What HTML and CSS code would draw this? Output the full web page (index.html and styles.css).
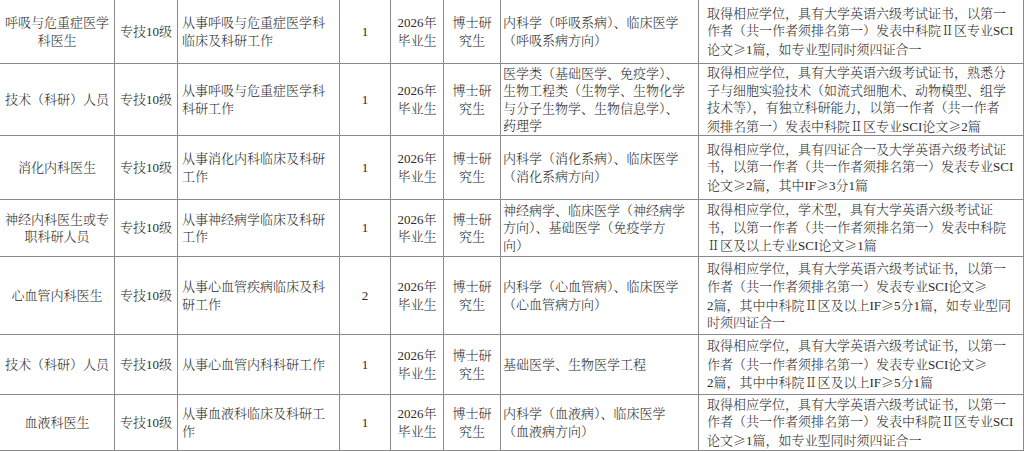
FILE: index.html
```html
<!DOCTYPE html>
<html lang="zh-CN">
<head>
<meta charset="utf-8">
<title>招聘岗位表</title>
<link rel="stylesheet" href="styles.css">
</head>
<body>
<table class="posts">
  <colgroup>
    <col class="c1"><col class="c2"><col class="c3"><col class="c4"><col class="c5"><col class="c6"><col class="c7"><col class="c8">
  </colgroup>
  <tbody>
    <tr class="r1">
      <td class="ctr">呼吸与危重症医学<br>科医生</td>
      <td class="ctr">专技10级</td>
      <td class="duty">从事呼吸与危重症医学科<br>临床及科研工作</td>
      <td class="ctr">1</td>
      <td class="ctr">2026年<br>毕业生</td>
      <td class="ctr">博士研<br>究生</td>
      <td class="major">内科学（呼吸系病）、临床医学<br>（呼吸系病方向）</td>
      <td class="req">取得相应学位，具有大学英语六级考试证书，以第一<br>作者（共一作者须排名第一）发表中科院Ⅱ区专业SCI<br>论文<span class="w">≥</span>1篇，如专业型同时须四证合一</td>
    </tr>
    <tr class="r2">
      <td class="ctr">技术（科研）人员</td>
      <td class="ctr">专技10级</td>
      <td class="duty">从事呼吸与危重症医学科<br>科研工作</td>
      <td class="ctr">1</td>
      <td class="ctr">2026年<br>毕业生</td>
      <td class="ctr">博士研<br>究生</td>
      <td class="major">医学类（基础医学、免疫学）、<br>生物工程类（生物学、生物化学<br>与分子生物学、生物信息学）、<br>药理学</td>
      <td class="req">取得相应学位，具有大学英语六级考试证书，熟悉分<br>子与细胞实验技术（如流式细胞术、动物模型、组学<br>技术等），有独立科研能力，以第一作者（共一作者<br>须排名第一）发表中科院Ⅱ区专业SCI论文<span class="w">≥</span>2篇</td>
    </tr>
    <tr class="r3">
      <td class="ctr">消化内科医生</td>
      <td class="ctr">专技10级</td>
      <td class="duty">从事消化内科临床及科研<br>工作</td>
      <td class="ctr">1</td>
      <td class="ctr">2026年<br>毕业生</td>
      <td class="ctr">博士研<br>究生</td>
      <td class="major">内科学（消化系病）、临床医学<br>（消化系病方向）</td>
      <td class="req">取得相应学位，具有四证合一及大学英语六级考试证<br>书，以第一作者（共一作者须排名第一）发表专业SCI<br>论文<span class="w">≥</span>2篇，其中IF<span class="w">≥</span>3分1篇</td>
    </tr>
    <tr class="r4">
      <td class="ctr">神经内科医生或专<br>职科研人员</td>
      <td class="ctr">专技10级</td>
      <td class="duty">从事神经病学临床及科研<br>工作</td>
      <td class="ctr">1</td>
      <td class="ctr">2026年<br>毕业生</td>
      <td class="ctr">博士研<br>究生</td>
      <td class="major">神经病学、临床医学（神经病学<br>方向）、基础医学（免疫学方<br>向）</td>
      <td class="req">取得相应学位，学术型，具有大学英语六级考试证<br>书，以第一作者（共一作者须排名第一）发表中科院<br>Ⅱ区及以上专业SCI论文<span class="w">≥</span>1篇</td>
    </tr>
    <tr class="r5">
      <td class="ctr">心血管内科医生</td>
      <td class="ctr">专技10级</td>
      <td class="duty">从事心血管疾病临床及科<br>研工作</td>
      <td class="ctr">2</td>
      <td class="ctr">2026年<br>毕业生</td>
      <td class="ctr">博士研<br>究生</td>
      <td class="major">内科学（心血管病）、临床医学<br>（心血管病方向）</td>
      <td class="req">取得相应学位，具有大学英语六级考试证书，以第一<br>作者（共一作者须排名第一）发表专业SCI论文<span class="w">≥</span><br>2篇，其中中科院Ⅱ区及以上IF<span class="w">≥</span>5分1篇，如专业型同<br>时须四证合一</td>
    </tr>
    <tr class="r6">
      <td class="ctr">技术（科研）人员</td>
      <td class="ctr">专技10级</td>
      <td class="duty">从事心血管内科科研工作</td>
      <td class="ctr">1</td>
      <td class="ctr">2026年<br>毕业生</td>
      <td class="ctr">博士研<br>究生</td>
      <td class="major">基础医学、生物医学工程</td>
      <td class="req">取得相应学位，具有大学英语六级考试证书，以第一<br>作者（共一作者须排名第一）发表专业SCI论文<span class="w">≥</span><br>2篇，其中中科院Ⅱ区及以上IF<span class="w">≥</span>5分1篇</td>
    </tr>
    <tr class="r7">
      <td class="ctr">血液科医生</td>
      <td class="ctr">专技10级</td>
      <td class="duty">从事血液科临床及科研工<br>作</td>
      <td class="ctr">1</td>
      <td class="ctr">2026年<br>毕业生</td>
      <td class="ctr">博士研<br>究生</td>
      <td class="major">内科学（血液病）、临床医学<br>（血液病方向）</td>
      <td class="req">取得相应学位，具有大学英语六级考试证书，以第一<br>作者（共一作者须排名第一）发表中科院Ⅱ区专业SCI<br>论文<span class="w">≥</span>1篇，如专业型同时须四证合一</td>
    </tr>
  </tbody>
</table>
</body>
</html>
```

FILE: styles.css
```css
html, body {
  margin: 0;
  padding: 0;
  background: #ffffff;
}

body {
  overflow: hidden;
}

.posts {
  border-collapse: collapse;
  table-layout: fixed;
  width: 1024px;
  margin: -1px 0 0 -1px;
  font-family: "Liberation Serif", "Noto Serif CJK SC", "Noto Sans CJK SC", serif;
  font-size: 13px;
  line-height: 17.5px;
  color: #2b2b2b;
}

.posts td {
  border: 1px solid #8a8a8a;
  padding: 0 2px;
  vertical-align: middle;
  white-space: nowrap;
  overflow: hidden;
  font-weight: 300;
}

.w {
  font-family: "Noto Serif CJK SC", "Noto Sans CJK SC", sans-serif;
}

.c1 { width: 115px; }
.c2 { width: 63px; }
.c3 { width: 162px; }
.c4 { width: 51px; }
.c5 { width: 53px; }
.c6 { width: 57px; }
.c7 { width: 198px; }
.c8 { width: 325px; }

.ctr { text-align: center; }

.posts td.duty {
  text-align: left;
  padding-left: 4px;
}

.posts td.major {
  text-align: left;
  padding-left: 2px;
}

.posts td.req {
  text-align: left;
  padding-left: 8px;
}

.r1 td { height: 63px; }
.r2 td { height: 65px; }
.r3 td { height: 63px; }
.r4 td { height: 56px; }
.r5 td { height: 77px; }
.r6 td { height: 59px; }
.r7 td { height: 55px; }
```
